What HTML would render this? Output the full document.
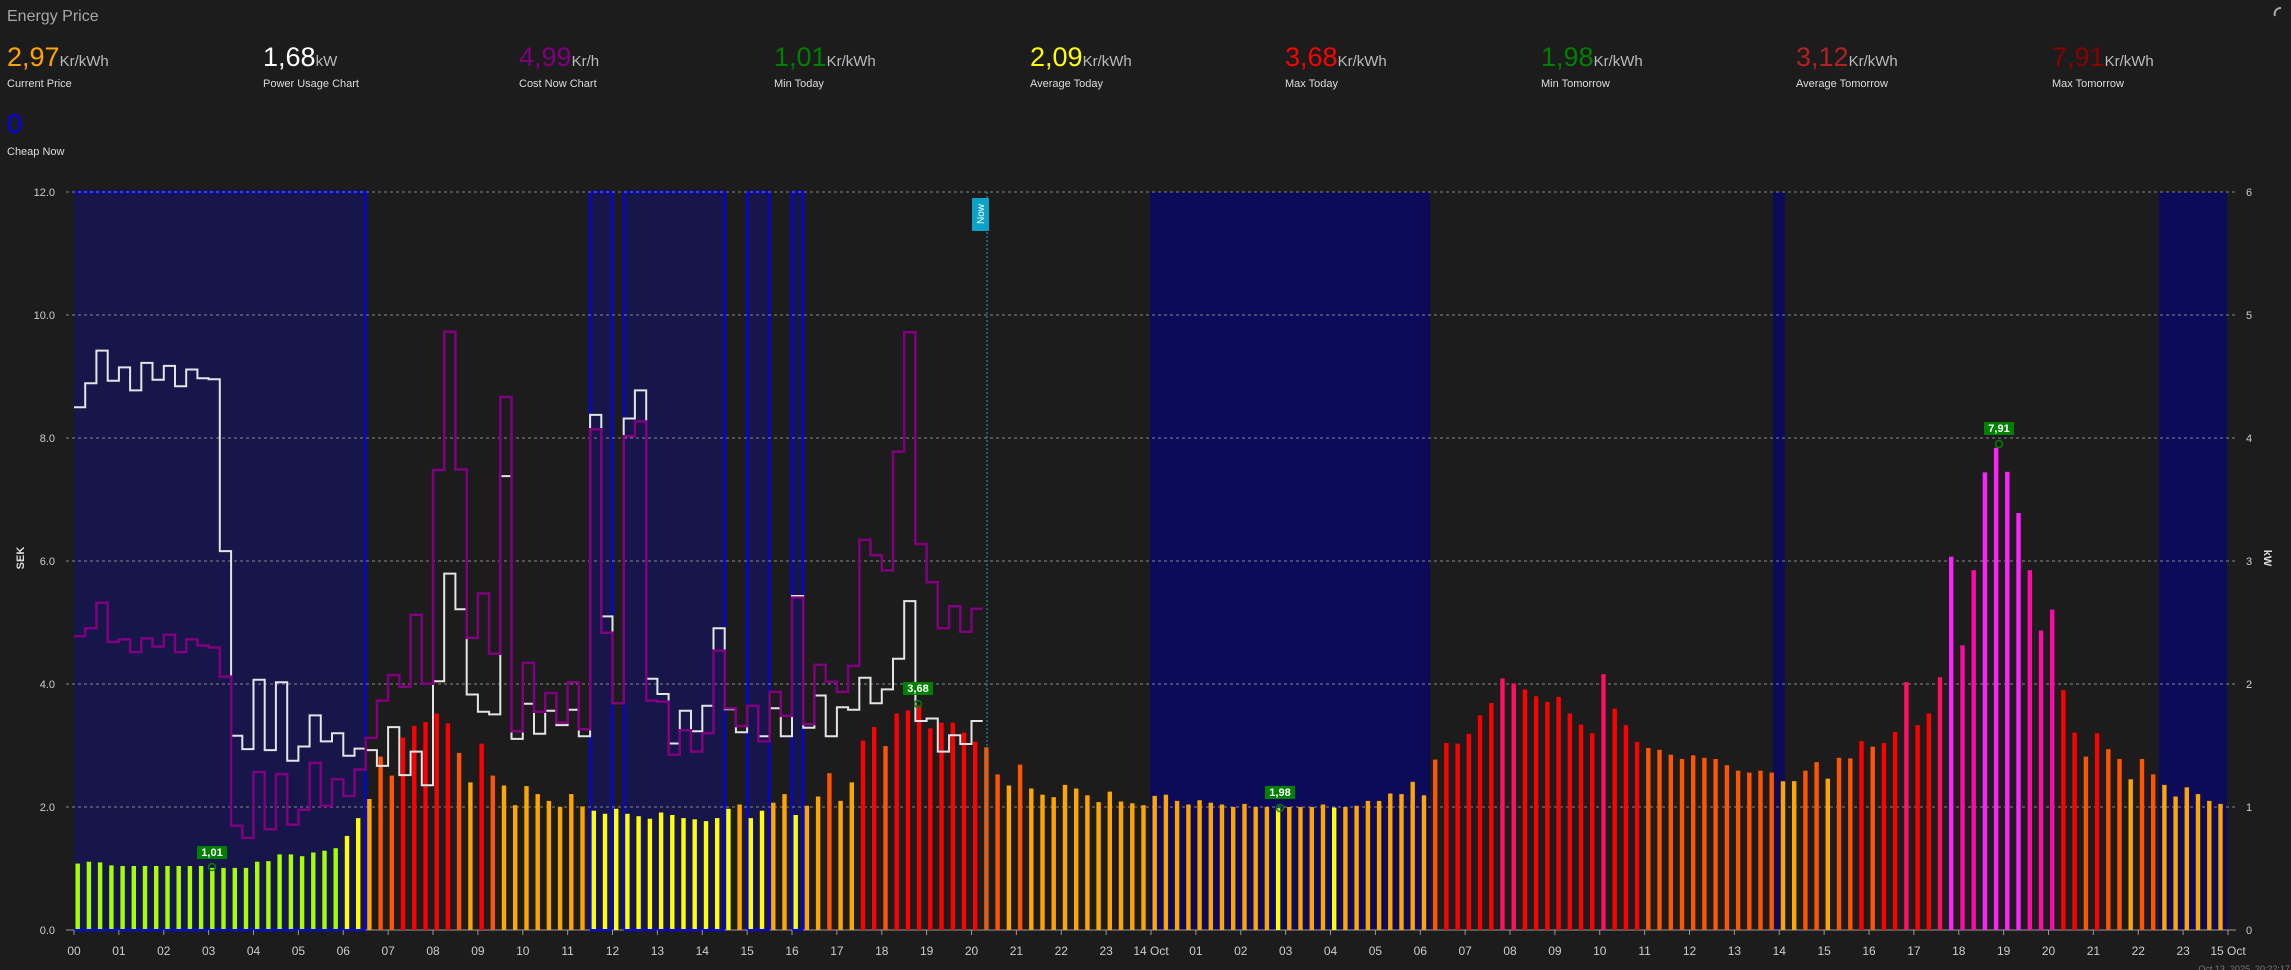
<!DOCTYPE html>
<html><head><meta charset="utf-8">
<style>
html,body{margin:0;padding:0;background:#1c1c1c;width:2291px;height:970px;overflow:hidden}
body{font-family:"Liberation Sans Narrow","Liberation Sans",sans-serif;color:#ddd;position:relative}
.title{position:absolute;left:7px;top:8px;font-size:16px;color:#a8a8a8}
.stat{position:absolute;white-space:nowrap}
.v{font-size:27px;line-height:27px}
.u{font-size:15px;color:#bbb}
.l{position:absolute;font-size:11px;color:#ddd;white-space:nowrap}
svg{position:absolute;left:0;top:0}
</style></head><body>
<div class="title">Energy Price</div>
<div class="stat" style="left:7px;top:44px"><span class="v" style="color:#ffa500">2,97</span><span class="u">Kr/kWh</span></div>
<div class="l" style="left:7px;top:78px">Current Price</div>
<div class="stat" style="left:263px;top:44px"><span class="v" style="color:#fff">1,68</span><span class="u">kW</span></div>
<div class="l" style="left:263px;top:78px">Power Usage Chart</div>
<div class="stat" style="left:519px;top:44px"><span class="v" style="color:#800080">4,99</span><span class="u">Kr/h</span></div>
<div class="l" style="left:519px;top:78px">Cost Now Chart</div>
<div class="stat" style="left:774px;top:44px"><span class="v" style="color:#008000">1,01</span><span class="u">Kr/kWh</span></div>
<div class="l" style="left:774px;top:78px">Min Today</div>
<div class="stat" style="left:1030px;top:44px"><span class="v" style="color:#ffff00">2,09</span><span class="u">Kr/kWh</span></div>
<div class="l" style="left:1030px;top:78px">Average Today</div>
<div class="stat" style="left:1285px;top:44px"><span class="v" style="color:#ff0000">3,68</span><span class="u">Kr/kWh</span></div>
<div class="l" style="left:1285px;top:78px">Max Today</div>
<div class="stat" style="left:1541px;top:44px"><span class="v" style="color:#008000">1,98</span><span class="u">Kr/kWh</span></div>
<div class="l" style="left:1541px;top:78px">Min Tomorrow</div>
<div class="stat" style="left:1796px;top:44px"><span class="v" style="color:#b22222">3,12</span><span class="u">Kr/kWh</span></div>
<div class="l" style="left:1796px;top:78px">Average Tomorrow</div>
<div class="stat" style="left:2052px;top:44px"><span class="v" style="color:#8b0000">7,91</span><span class="u">Kr/kWh</span></div>
<div class="l" style="left:2052px;top:78px">Max Tomorrow</div>
<div class="stat" style="left:7px;top:111px"><span class="v" style="color:#0000ff">0</span></div>
<div class="l" style="left:7px;top:146px">Cheap Now</div>

<svg id="ch" width="2291" height="970" xmlns="http://www.w3.org/2000/svg"></svg>
<script>
var P=[1.08,1.11,1.1,1.05,1.04,1.04,1.04,1.04,1.04,1.04,1.04,1.04,1.01,1.01,1.01,1.01,1.11,1.12,1.23,1.23,1.2,1.26,1.29,1.33,
1.53,1.82,2.13,2.82,2.51,3.13,3.32,3.38,3.52,3.36,2.88,2.4,3.03,2.51,
2.35,2.03,2.34,2.21,2.1,2.0,2.21,2.01,1.94,1.89,1.97,1.89,1.85,1.81,1.91,1.87,1.82,1.8,1.77,1.82,1.97,2.04,1.82,1.94,2.07,2.21,1.87,2.02,2.17,2.55,2.1,2.4,3.08,3.3,2.99,3.52,3.57,3.65,3.28,3.37,3.37,3.21,3.06,2.97,2.53,
2.35,2.69,2.3,2.2,2.16,2.36,2.3,2.19,2.08,2.25,2.09,2.06,2.03,2.18,2.2,2.1,2.04,2.11,2.07,2.04,2.0,2.05,2.0,2.0,1.98,2.0,2.0,2.0,2.04,1.99,2.0,2.02,2.1,2.1,2.22,2.21,2.41,2.19,2.77,3.04,3.03,3.19,3.49,3.69,4.09,4.01,3.91,3.8,3.71,3.79,3.52,3.34,3.2,4.16,3.6,3.33,3.06,2.96,2.93,2.85,2.78,2.84,2.8,2.78,2.68,2.59,2.56,2.59,2.56,2.42,2.42,2.59,2.73,2.46,2.8,2.79,3.07,2.98,3.04,3.22,4.03,
3.33,3.52,4.11,6.07,4.63,5.85,7.44,7.84,7.45,6.78,5.85,4.87,5.21,3.9,3.21,2.82,3.2,2.94,2.78,2.45,2.78,2.53,2.36,2.17,2.32,2.21,2.1,2.05];
var W=[465,418,354,413,387,432,378,411,384,424,391,408,410,747,1109,1135,999,1137,1004,1158,1130,1069,1120,1104,1148,1134,1137,1168,1092,1186,1140,1206,1002,791,861,1028,1062,1067,
600,1115,1046,1105,1060,1088,1058,1110,480,875,1045,487,432,997,1027,1124,1060,1100,1050,898,1057,1102,1050,1110,1055,1110,835,1093,1030,1110,1053,1058,995,1045,1018,958,845,1080,1075,1140,1108,1125,1080];
var U=[914,898,848,925,920,945,918,934,911,945,920,932,936,993,1285,1309,1180,1292,1184,1283,1254,1162,1246,1194,1227,1175,1113,1040,990,1013,872,1007,588,317,587,917,830,948,
445,1100,966,1062,1025,1083,1004,1096,508,907,1045,522,493,1040,1042,1146,1098,1140,1104,942,1055,1090,1050,1120,1023,1070,838,1086,970,1003,1023,972,725,755,785,552,318,733,808,898,855,905,860];
var X0=74,Q=(2228-74)/192,Y0=930,S=61.5,TOP=192;
function qx(i){return X0+i*Q}
function col(p){if(p<1.5)return'#a6ff00';if(p<1.995)return'#ffff00';if(p<2.5)return'#ffa500';if(p<3.0)return'#ff5500';if(p<4.0)return'#ff0000';if(p<4.5)return'#ff1060';if(p<6.0)return'#ff0aa8';return'#ff22ff';}
var s='';
[[1150,1430],[1773,1785],[2159,2227]].forEach(function(r){s+='<rect x="'+r[0]+'" y="'+TOP+'" width="'+(r[1]-r[0])+'" height="'+(Y0-TOP)+'" fill="#0b0b5a"/>';});
var Z1=[[0,26],[46,48],[49,58],[60,62],[64,65]];
Z1.forEach(function(r){var a=qx(r[0]),b=qx(r[1]);s+='<rect x="'+a+'" y="'+TOP+'" width="'+(b-a)+'" height="'+(Y0-TOP)+'" fill="#16164a"/>';
s+='<path d="M'+a+','+TOP+'H'+b+'V'+Y0+'" fill="none" stroke="#0000ff" stroke-width="2"/>';
if(r[0]>0)s+='<line x1="'+a+'" x2="'+a+'" y1="'+TOP+'" y2="'+Y0+'" stroke="#0000ff" stroke-width="2"/>';});
for(var k=0;k<=6;k++){var y=Y0-k*123;if(k>0)s+='<line x1="66" x2="2236" y1="'+y+'" y2="'+y+'" stroke="#9a9a9a" stroke-width="1" stroke-dasharray="3,3" opacity="0.85"/>';
s+='<text x="55" y="'+(y+4)+'" fill="#ccc" font-size="11" text-anchor="end" font-family="Liberation Sans,sans-serif">'+(k*2).toFixed(1)+'</text>';
s+='<text x="2246" y="'+(y+4)+'" fill="#ccc" font-size="11" font-family="Liberation Sans,sans-serif">'+k+'</text>';}
s+='<line x1="66" x2="2236" y1="'+Y0+'" y2="'+Y0+'" stroke="#999" stroke-width="1"/>';
for(var i=0;i<192;i++){var h=P[i]*S;s+='<rect x="'+(qx(i)+1.5).toFixed(1)+'" y="'+(Y0-h).toFixed(1)+'" width="4.4" height="'+h.toFixed(1)+'" fill="'+col(P[i])+'"/>';}
Z1.forEach(function(r){s+='<line x1="'+qx(r[0])+'" x2="'+qx(r[1])+'" y1="'+Y0+'" y2="'+Y0+'" stroke="#0000ff" stroke-width="2"/>';});
function line(a,c,w){var d='';for(var i=0;i<a.length;i++){var y=(170+a[i]/1.96).toFixed(1);d+=(i==0?'M':'L')+qx(i).toFixed(1)+','+y+'L'+qx(i+1).toFixed(1)+','+y;}
s+='<path d="'+d+'" fill="none" stroke="'+c+'" stroke-width="'+w+'"/>';}
line(W,'#e4e4e4',2);
line(U,'#800080',2.5);
var lb=['00','01','02','03','04','05','06','07','08','09','10','11','12','13','14','15','16','17','18','19','20','21','22','23','14 Oct','01','02','03','04','05','06','07','08','09','10','11','12','13','14','15','16','17','18','19','20','21','22','23','15 Oct'];
for(var j=0;j<=48;j++){var x=X0+j*4*Q;s+='<line x1="'+x+'" x2="'+x+'" y1="'+Y0+'" y2="'+(Y0+5)+'" stroke="#999"/>';
s+='<text x="'+x+'" y="'+(Y0+25)+'" fill="#ccc" font-size="12" text-anchor="middle" font-family="Liberation Sans,sans-serif">'+lb[j]+'</text>';}
s+='<line x1="987" x2="987" y1="'+TOP+'" y2="'+Y0+'" stroke="#1aa0c0" stroke-width="1" stroke-dasharray="2,2"/>';
s+='<rect x="972" y="198" width="17" height="33" rx="1" fill="#0ba2c6"/>';
s+='<text transform="translate(984,214) rotate(-90)" fill="#fff" font-size="10" text-anchor="middle" font-family="Liberation Sans,sans-serif">Now</text>';
function mk(cx,cy,bx,by,t){s+='<rect x="'+(bx-15)+'" y="'+by+'" width="30" height="13" fill="#008000"/>';
s+='<text x="'+bx+'" y="'+(by+10)+'" fill="#fff" font-size="11" font-weight="bold" text-anchor="middle" font-family="Liberation Sans,sans-serif">'+t+'</text>';
s+='<circle cx="'+cx+'" cy="'+cy+'" r="3.5" fill="none" stroke="#008000" stroke-width="1.5"/>';}
mk(212,867,212,846,'1,01');
mk(918,704,918,682,'3,68');
mk(1280,808,1280,786,'1,98');
mk(1999,444,1999,422,'7,91');
s+='<text transform="translate(24,558) rotate(-90)" fill="#ddd" font-size="11" font-weight="bold" text-anchor="middle" font-family="Liberation Sans,sans-serif">SEK</text>';
s+='<text transform="translate(2264,558) rotate(90)" fill="#ddd" font-size="11" font-weight="bold" text-anchor="middle" font-family="Liberation Sans,sans-serif">kW</text>';
s+='<text x="2290" y="972" fill="#777" font-size="9" text-anchor="end" font-family="Liberation Sans,sans-serif">Oct 13, 2025, 20:22:17</text>';
s+='<path d="M2275,16 A6,6 0 0 1 2281,8" fill="none" stroke="#aaa" stroke-width="2"/>';
document.getElementById('ch').innerHTML=s;
</script>
</body></html>
